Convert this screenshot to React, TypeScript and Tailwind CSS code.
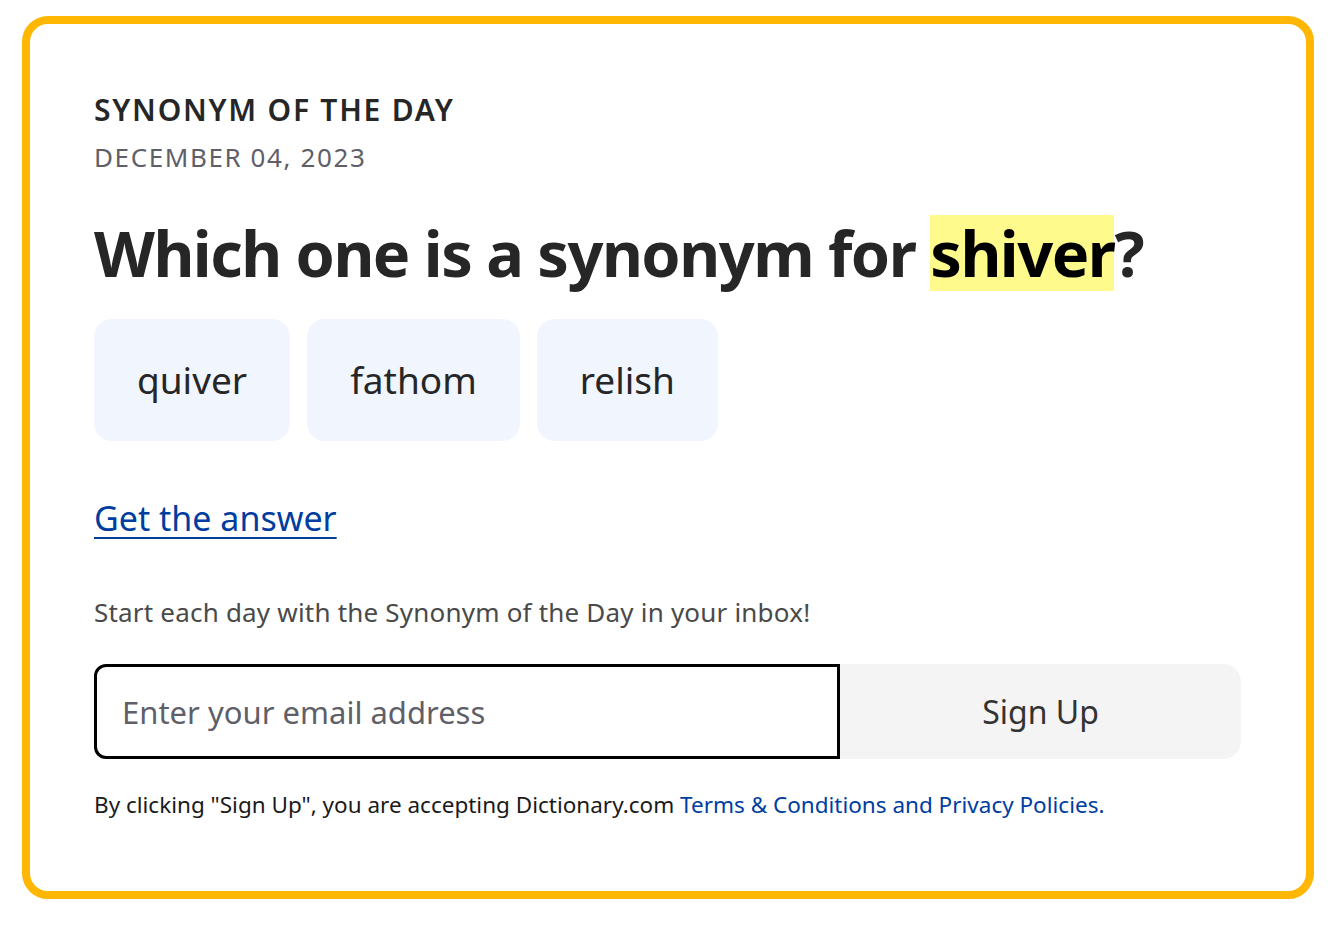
export default function App() {
    const options = ['quiver', 'fathom', 'relish'];

    return (
        <div className="min-h-screen bg-white pt-4 px-[22px]" style={{ fontFamily: '"Noto Sans", "Open Sans", sans-serif' }}>
            <div className="w-[1292px] h-[883px] rounded-[26px] border-[8px] border-[#FFB703] pl-[64px] pt-[68px]">
                <h2 className="text-[30px] leading-[36px] font-semibold tracking-[1.75px] text-[#262626]">SYNONYM OF THE DAY</h2>
                <p className="text-[26px] leading-[34px] tracking-[1.6px] text-[#5f5f69] mt-[12px]">DECEMBER 04, 2023</p>

                <h1 className="mt-[41px] text-[63px] leading-[76px] font-bold text-[#262626] tracking-[-1.5px]">
                    Which one is a synonym for <span className="inline-block bg-[#FFFA8C] text-black">shiver</span>?
                </h1>

                <div className="mt-[28px] flex gap-[17px]">
                    {options.map((option) => (
                        <button
                            key={option}
                            className="h-[122px] px-[43px] rounded-[18px] bg-[#F0F5FE] text-[37px] text-[#262626]"
                        >
                            {option}
                        </button>
                    ))}
                </div>

                <a href="#" className="mt-[55px] block w-fit text-[34px] leading-[44px] text-[#003DA0] underline underline-offset-[6px] decoration-[2px]">
                    Get the answer
                </a>

                <p className="mt-[55px] text-[26px] leading-[34px] tracking-[0.2px] text-[#4a4a4a]">
                    Start each day with the Synonym of the Day in your inbox!
                </p>

                <div className="mt-[35px] flex w-[1147px] h-[95px]">
                    <input
                        type="email"
                        placeholder="Enter your email address"
                        className="w-[746px] h-full rounded-l-[12px] border-[3px] border-black px-[25px] text-[31px] text-[#262626] placeholder:text-[#5f5f69] outline-none"
                    />
                    <button className="flex-1 h-full rounded-r-[18px] bg-[#F4F4F4] text-[32px] text-[#333333]">
                        Sign Up
                    </button>
                </div>

                <p className="mt-[31px] text-[22.5px] leading-[30px] text-[#1a1a1a]">
                    By clicking "Sign Up", you are accepting Dictionary.com{' '}
                    <a href="#" className="text-[#003DA0]">Terms &amp; Conditions and Privacy Policies.</a>
                </p>
            </div>
        </div>
    );
}
